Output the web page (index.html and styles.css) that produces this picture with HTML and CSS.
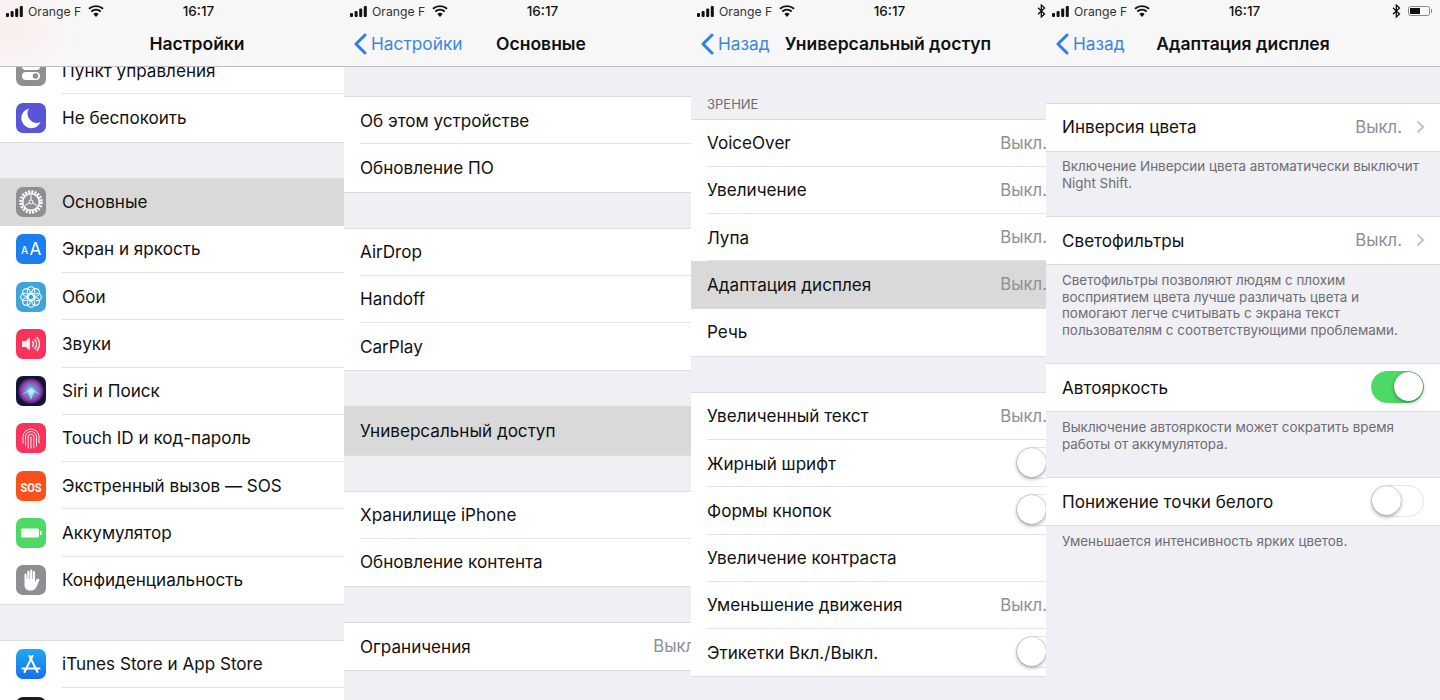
FILE: index.html
```html
<!DOCTYPE html>
<html lang="ru">
<head>
  <meta charset="UTF-8" />
  <title>Настройки iPhone</title>
  <link rel="stylesheet" href="styles.css">
</head>
<body>

<svg class="defs" width="0" height="0">
  <symbol id="signal" viewBox="0 0 18 11">
    <rect x="0" y="7" width="3" height="4" rx="1"/>
    <rect x="4.6" y="5" width="3" height="6" rx="1"/>
    <rect x="9.2" y="2.5" width="3" height="8.5" rx="1"/>
    <rect x="13.8" y="0" width="3" height="11" rx="1"/>
  </symbol>
  <symbol id="wifi" viewBox="0 0 16 12">
    <path d="M8 12 5.4 8.9a4 4 0 0 1 5.2 0Z"/>
    <path d="M3.9 7.2a6.3 6.3 0 0 1 8.2 0l1.2-1.5a8.3 8.3 0 0 0-10.6 0Z"/>
    <path d="M1.6 4.5a9.8 9.8 0 0 1 12.8 0L15.700 3A11.800 11.800 0 0 0 .3 3Z"/>
  </symbol>
  <symbol id="bt" viewBox="0 0 9 14">
    <path d="M1 3.800 7.500 10 4.300 13V1l3.200 3L1 10.200" fill="none" stroke="#111" stroke-width="1.300"/>
  </symbol>
  <symbol id="back" viewBox="0 0 14 22">
    <path d="M12 2 3 11l9 9" fill="none" stroke="#2f80e4" stroke-width="3" stroke-linecap="round" stroke-linejoin="round"/>
  </symbol>
  <symbol id="chev" viewBox="0 0 9 14">
    <path d="M1.500 1.500 7.200 7l-5.700 5.500" fill="none" stroke="#c4c4c8" stroke-width="2"/>
  </symbol>
</svg>

<div class="screens">

  <!-- настройки -->
  <section class="panel panel-a">
    <div class="phone">
      <header class="top top-tint">
        <div class="status">
          <div class="carrier"><svg class="ic-signal"><use href="#signal"/></svg>Orange F<svg class="ic-wifi"><use href="#wifi"/></svg></div>
          <div class="clock">16:17</div>
          <div class="status-right"></div>
        </div>
        <div class="nav">
          <div></div>
          <div class="title">Настройки</div>
          <div></div>
        </div>
      </header>
      <div class="content">
        <div class="group group-scrolled">
          <div class="row">
            <svg class="app" viewBox="0 0 30 30"><rect width="30" height="30" rx="7" fill="#8e8e93"/><rect x="6" y="7" width="18" height="7" rx="3.500" fill="#fff"/><rect x="6" y="16" width="18" height="8" rx="4" fill="#fff"/><circle cx="19.500" cy="20" r="2.800" fill="#8e8e93"/></svg>
            <div class="row-body"><span class="label">Пункт управления</span></div>
          </div>
          <div class="row">
            <svg class="app" viewBox="0 0 30 30"><rect width="30" height="30" rx="7" fill="#5856d6"/><path d="M13 5.500a10 10 0 1 0 11.500 13.800A9.500 9.500 0 0 1 13 5.500Z" fill="#fff"/></svg>
            <div class="row-body"><span class="label">Не беспокоить</span></div>
          </div>
        </div>
        <div class="group">
          <div class="row row-on">
            <svg class="app" viewBox="0 0 30 30"><rect width="30" height="30" rx="7" fill="#8e8e93"/><circle cx="15" cy="15" r="10.300" fill="none" stroke="#fff" stroke-width="3" stroke-dasharray="2 1.240"/><circle cx="15" cy="15" r="8.300" fill="none" stroke="#fff" stroke-width="1.500"/><circle cx="15" cy="15" r="2" fill="none" stroke="#fff" stroke-width="1"/><path d="M15 13V8M13.300 16 9 18.500M16.700 16 21 18.500" stroke="#fff" stroke-width="1"/></svg>
            <div class="row-body"><span class="label">Основные</span></div>
          </div>
          <div class="row">
            <svg class="app" viewBox="0 0 30 30"><rect width="30" height="30" rx="7" fill="#1a7ff0"/><text x="5" y="20" class="aa-small">A</text><text x="13.500" y="21" class="aa-big">A</text></svg>
            <div class="row-body"><span class="label">Экран и яркость</span></div>
          </div>
          <div class="row">
            <svg class="app" viewBox="0 0 30 30"><rect width="30" height="30" rx="7" fill="#3ea5d6"/><g fill="none" stroke="#fff" stroke-width="1.100"><circle cx="15" cy="8.500" r="3.800"/><circle cx="15" cy="21.500" r="3.800"/><circle cx="8.500" cy="15" r="3.800"/><circle cx="21.500" cy="15" r="3.800"/><circle cx="10.400" cy="10.400" r="3.800"/><circle cx="19.600" cy="10.400" r="3.800"/><circle cx="10.400" cy="19.600" r="3.800"/><circle cx="19.600" cy="19.600" r="3.800"/><circle cx="15" cy="15" r="3.800"/></g></svg>
            <div class="row-body"><span class="label">Обои</span></div>
          </div>
          <div class="row">
            <svg class="app" viewBox="0 0 30 30"><rect width="30" height="30" rx="7" fill="#f8345c"/><path d="M6 12h3.500L14 8.500v13L9.500 18H6Z" fill="#fff" opacity=".9"/><path d="M16.500 12.500a4 4 0 0 1 0 5M18.800 10.500a7 7 0 0 1 0 9M21 8.500a10 10 0 0 1 0 13" fill="none" stroke="#fff" stroke-width="1.300" stroke-linecap="round"/></svg>
            <div class="row-body"><span class="label">Звуки</span></div>
          </div>
          <div class="row">
            <svg class="app" viewBox="0 0 30 30"><defs><radialGradient id="siri"><stop offset="0" stop-color="#cfd8ec"/><stop offset=".4" stop-color="#4f9fd8"/><stop offset=".72" stop-color="#a83fa8"/><stop offset="1" stop-color="#3b2a78"/></radialGradient></defs><rect width="30" height="30" rx="7" fill="#14143a"/><circle cx="15" cy="15" r="12.500" fill="url(#siri)"/><path d="M5 19 15 12l10 7-7-3-3 8-3-8Z" fill="#e6eef8" opacity=".6"/></svg>
            <div class="row-body"><span class="label">Siri и Поиск</span></div>
          </div>
          <div class="row">
            <svg class="app" viewBox="0 0 30 30"><rect width="30" height="30" rx="7" fill="#f8345c"/><g fill="none" stroke="#fff" stroke-width="1" stroke-linecap="round" opacity=".9"><path d="M7 20v-6a8 8 0 0 1 16 0v6"/><path d="M9.500 23v-9a5.500 5.500 0 0 1 11 0v9"/><path d="M12.200 25V14a2.800 2.800 0 0 1 5.600 0v11"/><path d="M15 25V14"/></g></svg>
            <div class="row-body"><span class="label">Touch ID и код-пароль</span></div>
          </div>
          <div class="row">
            <svg class="app" viewBox="0 0 30 30"><rect width="30" height="30" rx="7" fill="#f9501c"/><text x="15" y="20.500" class="sos" textLength="21" lengthAdjust="spacingAndGlyphs">SOS</text></svg>
            <div class="row-body"><span class="label">Экстренный вызов — SOS</span></div>
          </div>
          <div class="row">
            <svg class="app" viewBox="0 0 30 30"><rect width="30" height="30" rx="7" fill="#4cd964"/><rect x="5" y="10.500" width="18" height="9" rx="1.500" fill="#fff"/><rect x="24" y="13" width="1.500" height="4" fill="#fff"/></svg>
            <div class="row-body"><span class="label">Аккумулятор</span></div>
          </div>
          <div class="row">
            <svg class="app" viewBox="0 0 30 30"><rect width="30" height="30" rx="7" fill="#8e8e93"/><path d="M8.500 9.500a1.100 1.100 0 0 1 2.200 0V14h.6V6.800a1.100 1.100 0 0 1 2.200 0V14h.6V5.500a1.100 1.100 0 0 1 2.200 0V14h.6V7a1.100 1.100 0 0 1 2.200 0v10l2-3a1.300 1.300 0 0 1 2.200 1.300l-3 7c-1 2-2.500 3.200-5 3.200h-1.500c-3 0-5.300-2-5.300-5.500Z" fill="#fff"/></svg>
            <div class="row-body"><span class="label">Конфиденциальность</span></div>
          </div>
        </div>
        <div class="group">
          <div class="row">
            <svg class="app" viewBox="0 0 30 30"><defs><linearGradient id="store" x1="0" y1="0" x2="0" y2="1"><stop offset="0" stop-color="#1ea9f5"/><stop offset="1" stop-color="#1a6fe8"/></linearGradient></defs><rect width="30" height="30" rx="7" fill="url(#store)"/><path d="M13.500 7 21.500 23M16.500 7 8.500 23M6.500 19.500h17" fill="none" stroke="#fff" stroke-width="2" stroke-linecap="round"/></svg>
            <div class="row-body"><span class="label">iTunes Store и App Store</span></div>
          </div>
          <div class="row">
            <svg class="app" viewBox="0 0 30 30"><rect width="30" height="30" rx="7" fill="#1c1c1e"/></svg>
            <div class="row-body"><span class="label">Wallet и Apple Pay</span></div>
          </div>
        </div>
      </div>
    </div>
  </section>

  <!-- основные -->
  <section class="panel panel-b">
    <div class="phone">
      <header class="top">
        <div class="status">
          <div class="carrier"><svg class="ic-signal"><use href="#signal"/></svg>Orange F<svg class="ic-wifi"><use href="#wifi"/></svg></div>
          <div class="clock">16:17</div>
          <div class="status-right"></div>
        </div>
        <div class="nav">
          <div class="back"><svg class="ic-back"><use href="#back"/></svg>Настройки</div>
          <div class="title">Основные</div>
          <div></div>
        </div>
      </header>
      <div class="content">
        <div class="group group-first">
          <div class="row"><div class="row-body"><span class="label">Об этом устройстве</span></div></div>
          <div class="row"><div class="row-body"><span class="label">Обновление ПО</span></div></div>
        </div>
        <div class="group">
          <div class="row"><div class="row-body"><span class="label">AirDrop</span></div></div>
          <div class="row"><div class="row-body"><span class="label">Handoff</span></div></div>
          <div class="row"><div class="row-body"><span class="label">CarPlay</span></div></div>
        </div>
        <div class="group">
          <div class="row row-on"><div class="row-body"><span class="label">Универсальный доступ</span></div></div>
        </div>
        <div class="group">
          <div class="row"><div class="row-body"><span class="label">Хранилище iPhone</span></div></div>
          <div class="row"><div class="row-body"><span class="label">Обновление контента</span></div></div>
        </div>
        <div class="group">
          <div class="row"><div class="row-body"><span class="label">Ограничения</span><span class="value">Выкл.</span><svg class="ic-chev"><use href="#chev"/></svg></div></div>
        </div>
      </div>
    </div>
  </section>

  <!-- универсальный доступ -->
  <section class="panel panel-c">
    <div class="phone">
      <header class="top">
        <div class="status">
          <div class="carrier"><svg class="ic-signal"><use href="#signal"/></svg>Orange F<svg class="ic-wifi"><use href="#wifi"/></svg></div>
          <div class="clock">16:17</div>
          <div class="status-right">
            <svg class="ic-bt"><use href="#bt"/></svg>
            <div class="battery"><i class="battery-fill"></i></div>
            <i class="battery-tip"></i>
          </div>
        </div>
        <div class="nav">
          <div class="back"><svg class="ic-back"><use href="#back"/></svg>Назад</div>
          <div class="title">Универсальный доступ</div>
          <div></div>
        </div>
      </header>
      <div class="content">
        <div class="caption">ЗРЕНИЕ</div>
        <div class="group group-captioned">
          <div class="row"><div class="row-body"><span class="label">VoiceOver</span><span class="value">Выкл.</span><svg class="ic-chev"><use href="#chev"/></svg></div></div>
          <div class="row"><div class="row-body"><span class="label">Увеличение</span><span class="value">Выкл.</span><svg class="ic-chev"><use href="#chev"/></svg></div></div>
          <div class="row"><div class="row-body"><span class="label">Лупа</span><span class="value">Выкл.</span><svg class="ic-chev"><use href="#chev"/></svg></div></div>
          <div class="row row-on"><div class="row-body"><span class="label">Адаптация дисплея</span><span class="value">Выкл.</span><svg class="ic-chev"><use href="#chev"/></svg></div></div>
          <div class="row"><div class="row-body"><span class="label">Речь</span></div></div>
        </div>
        <div class="group">
          <div class="row"><div class="row-body"><span class="label">Увеличенный текст</span><span class="value">Выкл.</span><svg class="ic-chev"><use href="#chev"/></svg></div></div>
          <div class="row"><div class="row-body"><span class="label">Жирный шрифт</span><div class="switch"><i class="knob"></i></div></div></div>
          <div class="row"><div class="row-body"><span class="label">Формы кнопок</span><div class="switch"><i class="knob"></i></div></div></div>
          <div class="row"><div class="row-body"><span class="label">Увеличение контраста</span></div></div>
          <div class="row"><div class="row-body"><span class="label">Уменьшение движения</span><span class="value">Выкл.</span><svg class="ic-chev"><use href="#chev"/></svg></div></div>
          <div class="row"><div class="row-body"><span class="label">Этикетки Вкл./Выкл.</span><div class="switch"><i class="knob"></i></div></div></div>
        </div>
      </div>
    </div>
  </section>

  <!-- адаптация дисплея -->
  <section class="panel panel-d">
    <div class="phone">
      <header class="top">
        <div class="status">
          <div class="carrier"><svg class="ic-signal"><use href="#signal"/></svg>Orange F<svg class="ic-wifi"><use href="#wifi"/></svg></div>
          <div class="clock">16:17</div>
          <div class="status-right">
            <svg class="ic-bt"><use href="#bt"/></svg>
            <div class="battery"><i class="battery-fill"></i></div>
            <i class="battery-tip"></i>
          </div>
        </div>
        <div class="nav">
          <div class="back"><svg class="ic-back"><use href="#back"/></svg>Назад</div>
          <div class="title">Адаптация дисплея</div>
          <div></div>
        </div>
      </header>
      <div class="content">
        <div class="group group-top">
          <div class="row"><div class="row-body"><span class="label">Инверсия цвета</span><span class="value">Выкл.</span><svg class="ic-chev"><use href="#chev"/></svg></div></div>
        </div>
        <p class="note">Включение Инверсии цвета автоматически выключит<br>Night Shift.</p>
        <div class="group group-flush">
          <div class="row"><div class="row-body"><span class="label">Светофильтры</span><span class="value">Выкл.</span><svg class="ic-chev"><use href="#chev"/></svg></div></div>
        </div>
        <p class="note">Светофильтры позволяют людям с плохим<br>восприятием цвета лучше различать цвета и<br>помогают легче считывать с экрана текст<br>пользователям с соответствующими проблемами.</p>
        <div class="group group-flush">
          <div class="row"><div class="row-body"><span class="label">Автояркость</span><div class="switch switch-on"><i class="knob"></i></div></div></div>
        </div>
        <p class="note">Выключение автояркости может сократить время<br>работы от аккумулятора.</p>
        <div class="group group-flush">
          <div class="row"><div class="row-body"><span class="label">Понижение точки белого</span><div class="switch"><i class="knob"></i></div></div></div>
        </div>
        <p class="note">Уменьшается интенсивность ярких цветов.</p>
      </div>
    </div>
  </section>

</div>

</body>
</html>
```

FILE: styles.css
```css
body {
  margin: 0;
  background: #efeff4;
  font-family: 'Inter', 'Roboto', sans-serif;
  color: #111;
  overflow: hidden;
}

.defs {
  display: block;
  height: 0;
}

.screens {
  display: flex;
  height: 700px;
}

.panel {
  flex: none;
  height: 700px;
  overflow: hidden;
}

.panel-a { width: 344px; }
.panel-b { width: 347px; }
.panel-c { width: 355px; }
.panel-d { width: 394px; }

.phone {
  width: 394px;
  height: 700px;
  display: flex;
  flex-direction: column;
}

/* status + nav */
.top {
  flex: none;
  height: 67px;
  box-sizing: border-box;
  background: #f7f7f8;
  border-bottom: 1px solid #bfbfc4;
  position: relative;
  z-index: 2;
}

.top-tint {
  background: radial-gradient(ellipse 70px 55px at 10px 30px, #fbeeec 0%, #f7f7f8 100%);
}

.status {
  height: 22px;
  display: grid;
  grid-template-columns: 1fr auto 1fr;
  align-items: center;
  font-size: 12.2px;
}

.carrier {
  display: flex;
  align-items: center;
  padding-left: 6px;
  color: #333;
}

.ic-signal {
  width: 18px;
  height: 11px;
  margin-right: 4px;
  fill: #111;
}

.ic-wifi {
  width: 16px;
  height: 12px;
  margin-left: 7px;
  fill: #111;
}

.clock {
  padding-left: 3px;
  font-size: 13.5px;
  font-weight: 500;
}

.status-right {
  display: flex;
  align-items: center;
  justify-content: flex-end;
  padding-right: 8px;
}

.ic-bt {
  width: 9px;
  height: 14px;
  margin-right: 7px;
}

.battery {
  width: 22px;
  height: 10px;
  box-sizing: border-box;
  border: 1px solid #8a8a8e;
  border-radius: 2.5px;
  padding: 1px;
}

.battery-fill {
  display: block;
  width: 10px;
  height: 6px;
  background: #111;
}

.battery-tip {
  display: block;
  width: 1.5px;
  height: 4px;
  margin-left: 1px;
  background: #8a8a8e;
}

.nav {
  height: 43px;
  display: grid;
  grid-template-columns: 1fr auto 1fr;
  align-items: center;
}

.title {
  font-size: 17.5px;
  font-weight: 600;
  white-space: nowrap;
}

.back {
  display: flex;
  align-items: center;
  padding-left: 9px;
  font-size: 17.3px;
  color: #3a87e2;
}

.ic-back {
  width: 14px;
  height: 22px;
  margin-right: 4px;
}

/* lists */
.content {
  flex: 1;
  overflow: hidden;
}

.group {
  margin-top: 37px;
  background: #fff;
  box-shadow: 0 -1px 0 #dcdce0, 0 1px 0 #dcdce0;
}

.group-scrolled { margin-top: -20px; }
.group-first { margin-top: 30px; }
.group-captioned { margin-top: 0; }
.group-top { margin-top: 36.5px; }
.group-flush { margin-top: 0; }

.caption {
  height: 52.5px;
  box-sizing: border-box;
  padding: 30px 16px 0;
  font-size: 13px;
  line-height: 14px;
  color: #6d6d72;
}

.row {
  height: 47.25px;
  display: flex;
  align-items: center;
  padding-left: 16px;
}

.row-on {
  background: #d9d9d9;
}

.app {
  flex: none;
  width: 30px;
  height: 30px;
  margin-right: 16px;
}

.aa-small {
  font: 500 10px 'Inter', sans-serif;
  fill: #fff;
}

.aa-big {
  font: 400 17px 'Inter', sans-serif;
  fill: #fff;
}

.sos {
  font: 700 13.5px 'Roboto', sans-serif;
  fill: #fff;
  text-anchor: middle;
}

.row-body {
  flex: 1;
  height: 100%;
  box-sizing: border-box;
  display: flex;
  align-items: center;
  padding-right: 15px;
  border-bottom: 1px solid #e3e3e6;
}

.row:last-child .row-body,
.row-on .row-body {
  border-bottom-color: transparent;
}

.label {
  flex: 1;
  font-size: 17.1px;
  white-space: nowrap;
}

.value {
  font-size: 16.7px;
  color: #8e8e93;
  white-space: nowrap;
}

.ic-chev {
  flex: none;
  width: 9px;
  height: 14px;
  margin-left: 14px;
}

.switch {
  flex: none;
  width: 53px;
  height: 32px;
  margin-right: 1px;
  box-sizing: border-box;
  display: flex;
  border: 1.5px solid #e6e6e9;
  border-radius: 16px;
  background: #fff;
}

.switch-on {
  justify-content: flex-end;
  background: #4cd964;
  border-color: #4cd964;
}

.knob {
  display: block;
  width: 29px;
  height: 29px;
  border-radius: 50%;
  background: #fff;
  box-shadow: 0 2px 4px rgba(0,0,0,0.3), 0 0 1px rgba(0,0,0,0.5);
}

.note {
  margin: 0;
  padding: 7.5px 16px 25.5px;
  font-size: 13.4px;
  line-height: 16.7px;
  color: #6d6d72;
}
```
